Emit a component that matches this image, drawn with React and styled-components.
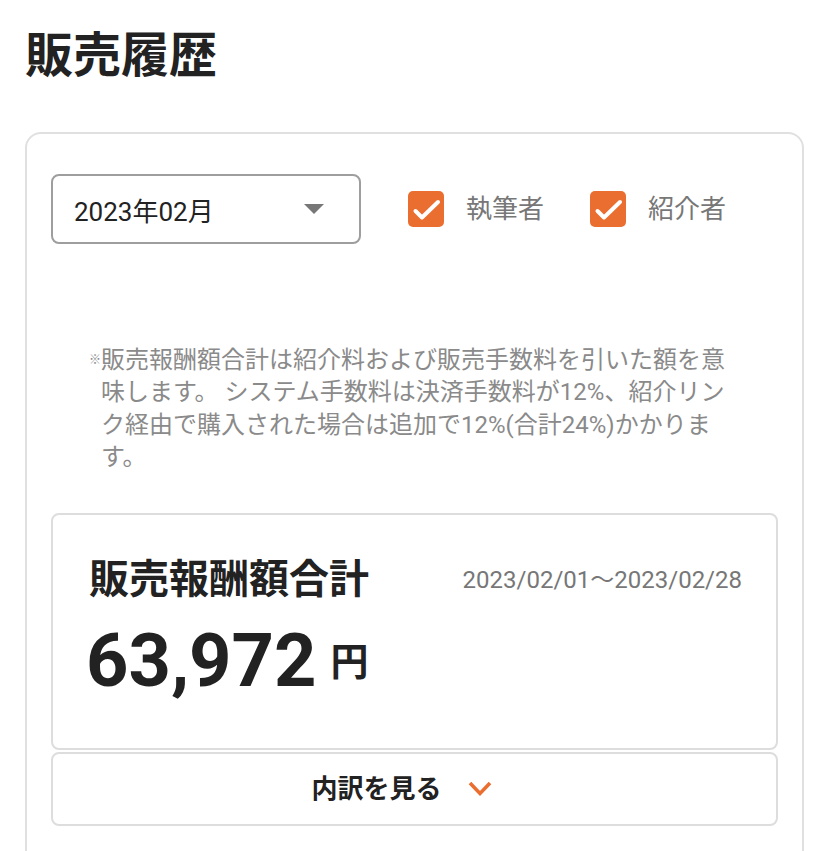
import React, { useState } from "react";
import styled, { createGlobalStyle } from "styled-components";

const GlobalStyle = createGlobalStyle`
  html, body {
    margin: 0;
    padding: 0;
    background: #fff;
    overflow: hidden;
  }
  body {
    font-family: Roboto, "Noto Sans CJK JP", sans-serif;
    color: #222;
  }
`;

const Page = styled.div`
  padding: 32px 24px 0 25px;
`;

const Title = styled.h1`
  margin: 0;
  font-size: 48px;
  line-height: 1;
  font-weight: 700;
  color: #222;
`;

const Panel = styled.section`
  margin-top: 52px;
  border: 2px solid #e0e0e0;
  border-radius: 16px;
  padding: 40px 24px 60px;
`;

const FilterRow = styled.div`
  display: flex;
  align-items: center;
`;

const MonthSelect = styled.button`
  width: 310px;
  height: 70px;
  box-sizing: border-box;
  display: flex;
  align-items: center;
  justify-content: space-between;
  padding: 0 35px 0 21px;
  border: 2px solid #9e9e9e;
  border-radius: 8px;
  background: #fff;
  font-family: inherit;
  font-size: 26px;
  color: #222;
  cursor: pointer;
`;

const CheckGroup = styled.div`
  display: flex;
  align-items: center;
  gap: 46px;
  margin-left: 47px;
`;

const CheckItem = styled.label`
  display: flex;
  align-items: center;
  gap: 22px;
  cursor: pointer;
`;

const Box = styled.span`
  width: 36px;
  height: 36px;
  border-radius: 5px;
  display: flex;
  align-items: center;
  justify-content: center;
  background: ${(p) => (p.$checked ? "#e96e30" : "#fff")};
  border: ${(p) => (p.$checked ? "none" : "2px solid #bbb")};
  box-sizing: border-box;
`;

const CheckLabel = styled.span`
  font-size: 26px;
  line-height: 1;
  color: #777;
`;

const Note = styled.p`
  margin: 100px 0 0 50px;
  font-size: 24px;
  line-height: 1.35;
  color: #8a8a8a;
  text-indent: -12px;
`;

const Mark = styled.span`
  font-size: 12px;
  vertical-align: 4.5px;
`;

const SummaryCard = styled.div`
  margin-top: 39px;
  border: 2px solid #ddd;
  border-radius: 8px;
  padding: 45px 34px 50px 36px;
`;

const SummaryHeader = styled.div`
  display: flex;
  align-items: center;
  justify-content: space-between;
`;

const SummaryTitle = styled.h2`
  margin: 0;
  font-size: 40px;
  line-height: 1;
  font-weight: 700;
  color: #222;
`;

const Period = styled.span`
  font-size: 24px;
  line-height: 1;
  color: #777;
`;

const AmountRow = styled.div`
  margin-top: 24px;
  display: flex;
  align-items: center;
  gap: 14px;
`;

const Amount = styled.span`
  margin-left: -3px;
  font-size: 74px;
  line-height: 1;
  font-weight: 700;
  color: #222;
`;

const Yen = styled.span`
  margin-top: 3px;
  font-size: 38px;
  line-height: 1;
  font-weight: 700;
  color: #222;
`;

const DetailButton = styled.button`
  margin-top: 2px;
  width: 100%;
  height: 74px;
  display: flex;
  align-items: center;
  justify-content: center;
  gap: 26px;
  padding: 0 26px 0 0;
  border: 2px solid #ddd;
  border-radius: 8px;
  background: #fff;
  font-family: inherit;
  cursor: pointer;
`;

const ButtonLabel = styled.span`
  font-size: 26px;
  line-height: 1;
  font-weight: 700;
  color: #222;
`;

function Caret() {
  return (
    <svg width="20" height="10" viewBox="0 0 20 10">
      <polygon points="0,0 20,0 10,10" fill="#777" />
    </svg>
  );
}

function Check() {
  return (
    <svg width="36" height="36" viewBox="0 0 36 36">
      <polyline
        points="7.5,20 14,26.5 30,11"
        fill="none"
        stroke="#fff"
        strokeWidth="4"
        strokeLinecap="round"
        strokeLinejoin="round"
      />
    </svg>
  );
}

function Chevron({ open }) {
  return (
    <svg
      width="24"
      height="15"
      viewBox="0 0 24 15"
      style={{ transform: open ? "rotate(180deg)" : "none" }}
    >
      <polyline
        points="2,2 12,12.5 22,2"
        fill="none"
        stroke="#e96e30"
        strokeWidth="3.5"
      />
    </svg>
  );
}

function CheckOption({ label, checked, onToggle }) {
  return (
    <CheckItem onClick={onToggle}>
      <Box $checked={checked}>{checked && <Check />}</Box>
      <CheckLabel>{label}</CheckLabel>
    </CheckItem>
  );
}

export default function App() {
  const [writer, setWriter] = useState(true);
  const [referrer, setReferrer] = useState(true);
  const [open, setOpen] = useState(false);

  return (
    <Page>
      <GlobalStyle />
      <Title>販売履歴</Title>
      <Panel>
        <FilterRow>
          <MonthSelect>
            <span>2023年02月</span>
            <Caret />
          </MonthSelect>
          <CheckGroup>
            <CheckOption label="執筆者" checked={writer} onToggle={() => setWriter(!writer)} />
            <CheckOption label="紹介者" checked={referrer} onToggle={() => setReferrer(!referrer)} />
          </CheckGroup>
        </FilterRow>

        <Note>
          <Mark>※</Mark>販売報酬額合計は紹介料および販売手数料を引いた額を意
          <br />
          味します。 システム手数料は決済手数料が12%、紹介リン
          <br />
          ク経由で購入された場合は追加で12%(合計24%)かかりま
          <br />
          す。
        </Note>

        <SummaryCard>
          <SummaryHeader>
            <SummaryTitle>販売報酬額合計</SummaryTitle>
            <Period>2023/02/01〜2023/02/28</Period>
          </SummaryHeader>
          <AmountRow>
            <Amount>63,972</Amount>
            <Yen>円</Yen>
          </AmountRow>
        </SummaryCard>

        <DetailButton onClick={() => setOpen(!open)}>
          <ButtonLabel>内訳を見る</ButtonLabel>
          <Chevron open={open} />
        </DetailButton>
      </Panel>
    </Page>
  );
}
